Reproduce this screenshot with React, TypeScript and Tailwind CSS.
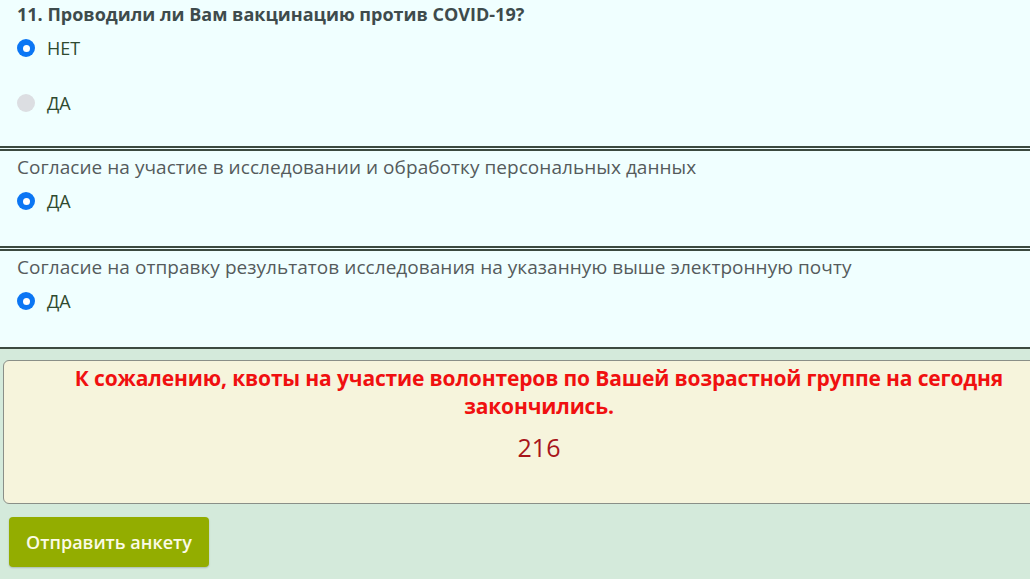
import React from "react"

function Radio({ checked, label }: { checked: boolean; label: string }) {
  return (
    <div className="flex items-center h-7">
      {checked ? (
        <span className="w-[18px] h-[18px] rounded-full bg-[#0b76f4] flex items-center justify-center ml-[17px]">
          <span className="w-[7px] h-[7px] rounded-full bg-white" />
        </span>
      ) : (
        <span className="w-[18px] h-[18px] rounded-full bg-[#dcdee2] ml-[17px]" />
      )}
      <span className="ml-3 text-[18px] text-[#2f4a30]">{label}</span>
    </div>
  )
}

export default function App() {
  return (
    <div className="w-[1030px] h-[579px] overflow-hidden bg-[#d4eadb]" style={{ fontFamily: '"Open Sans", sans-serif' }}>
      {/* Question 11 */}
      <div className="bg-[#f0ffff] border-b-[5px] border-double border-[#3c4a40] h-[151px]">
        <div className="pl-[17px] h-7 flex items-center text-[18px] font-bold text-[#3e4b4c]">
          11. Проводили ли Вам вакцинацию против COVID-19?
        </div>
        <div className="mt-[6px]">
          <Radio checked label="НЕТ" />
        </div>
        <div className="mt-[27px]">
          <Radio checked={false} label="ДА" />
        </div>
      </div>

      {/* Consent 1 */}
      <div className="bg-[#f0ffff] border-b-[5px] border-double border-[#3c4a40] h-[100px]">
        <div className="pl-[17px] h-7 pt-[4px] flex items-center text-[19px] tracking-[0.05px] text-[#555b5c]">
          Согласие на участие в исследовании и обработку персональных данных
        </div>
        <div className="mt-[8px]">
          <Radio checked label="ДА" />
        </div>
      </div>

      {/* Consent 2 */}
      <div className="bg-[#f0ffff] border-b-2 border-[#3c4a40] h-[98px]">
        <div className="pl-[17px] h-7 pt-[4px] flex items-center text-[19px] tracking-[0.05px] text-[#555b5c]">
          Согласие на отправку результатов исследования на указанную выше электронную почту
        </div>
        <div className="mt-[8px]">
          <Radio checked label="ДА" />
        </div>
      </div>

      {/* Quota message */}
      <div className="pt-[11px] pl-[3px]">
        <div className="w-[1072px] h-[144px] bg-[#f6f4dc] border border-[#8a8f88] rounded-[6px] pt-[3px] text-center">
          <p className="text-[21px] font-bold text-[#f01010] leading-[28px] px-[36px] tracking-[-0.15px]">
            К сожалению, квоты на участие волонтеров по Вашей возрастной группе на сегодня закончились.
          </p>
          <p className="mt-[12px] text-[25px] text-[#a8151b] leading-[30px]">216</p>
        </div>
      </div>

      <div className="pt-[13px] pl-[9px]">
        <button className="w-[200px] h-[50px] rounded-[4px] bg-[#93ad00] text-[#fbfbe6] text-[18px] font-semibold shadow-[0_1px_2px_rgba(0,0,0,0.2)]">
          Отправить анкету
        </button>
      </div>
    </div>
  )
}
